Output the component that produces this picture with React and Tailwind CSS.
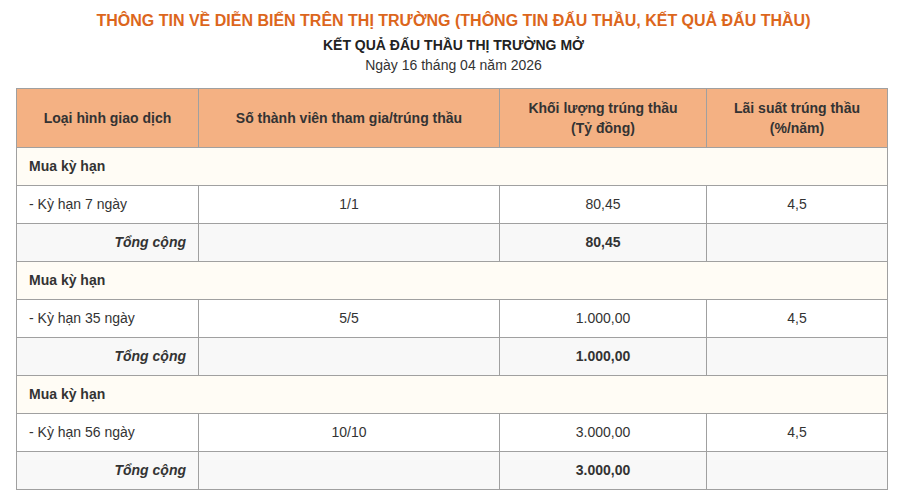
import { Fragment } from "react";

const groups = [
  { term: "- Kỳ hạn 7 ngày", members: "1/1", volume: "80,45", rate: "4,5" },
  { term: "- Kỳ hạn 35 ngày", members: "5/5", volume: "1.000,00", rate: "4,5" },
  { term: "- Kỳ hạn 56 ngày", members: "10/10", volume: "3.000,00", rate: "4,5" },
];

const cell = "border border-[#a0a0a0] h-[38px] px-3 py-0 align-middle";

export default function App() {
  return (
    <div className="bg-white min-h-screen px-4 text-[#333] font-['Liberation_Sans',Arial,sans-serif] text-[14px]">
      <h1 className="pt-[9px] text-center text-[16px] leading-[24px] font-bold text-[#dc661c]">
        THÔNG TIN VỀ DIỄN BIẾN TRÊN THỊ TRƯỜNG (THÔNG TIN ĐẤU THẦU, KẾT QUẢ ĐẤU THẦU)
      </h1>
      <h2 className="mt-[2px] text-center text-[14px] leading-[20px] font-bold text-[#222]">
        KẾT QUẢ ĐẤU THẦU THỊ TRƯỜNG MỞ
      </h2>
      <p className="text-center leading-[20px] text-[#333]">Ngày 16 tháng 04 năm 2026</p>

      <table className="mt-[13px] w-[871px] table-fixed border-collapse">
        <colgroup>
          <col className="w-[182px]" />
          <col className="w-[301px]" />
          <col className="w-[207px]" />
          <col className="w-[181px]" />
        </colgroup>
        <thead>
          <tr className="bg-[#f4b183]">
            <th className={`${cell} h-[59px] font-bold text-center leading-[20px]`}>Loại hình giao dịch</th>
            <th className={`${cell} h-[59px] font-bold text-center leading-[20px]`}>Số thành viên tham gia/trúng thầu</th>
            <th className={`${cell} h-[59px] font-bold text-center leading-[20px]`}>
              Khối lượng trúng thầu
              <br />
              (Tỷ đồng)
            </th>
            <th className={`${cell} h-[59px] font-bold text-center leading-[20px]`}>
              Lãi suất trúng thầu
              <br />
              (%/năm)
            </th>
          </tr>
        </thead>
        <tbody>
          {groups.map((g, i) => (
            <Fragment key={i}>
              <tr className="bg-[#fffcf5]">
                <td colSpan={4} className={`${cell} font-bold`}>Mua kỳ hạn</td>
              </tr>
              <tr className="bg-white">
                <td className={cell}>{g.term}</td>
                <td className={`${cell} text-center`}>{g.members}</td>
                <td className={`${cell} text-center`}>{g.volume}</td>
                <td className={`${cell} text-center`}>{g.rate}</td>
              </tr>
              <tr className="bg-[#f8f8f8]">
                <td className={`${cell} text-right font-bold italic`}>Tổng cộng</td>
                <td className={cell}></td>
                <td className={`${cell} text-center font-bold`}>{g.volume}</td>
                <td className={cell}></td>
              </tr>
            </Fragment>
          ))}
        </tbody>
      </table>
    </div>
  );
}
